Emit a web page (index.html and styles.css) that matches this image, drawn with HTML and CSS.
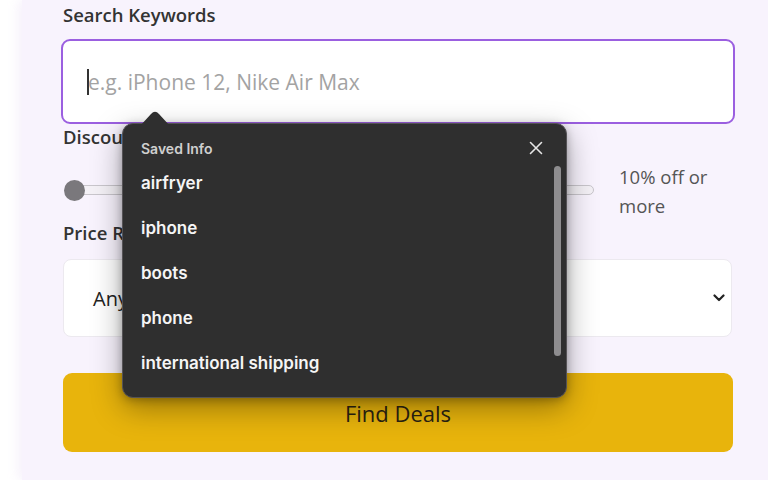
FILE: index.html
```html
<!DOCTYPE html>
<html>
<head>
<meta charset="utf-8">
<link rel="stylesheet" href="styles.css">
</head>
<body>
<div class="page">
  <div class="card">
    <div class="field field-keywords">
      <label class="label">Search Keywords</label>
      <div class="input">
        <span class="caret"></span>
        <span class="placeholder">e.g. iPhone 12, Nike Air Max</span>
      </div>
      <div class="popup">
        <svg class="arrow" width="30" height="16" viewBox="0 0 30 16"><path d="M0 16 L11 4 Q15 -0.5 19 4 L30 16 Z" fill="#2f2f2f"/></svg>
        <div class="popup-head">
          <span class="popup-title">Saved Info</span>
          <svg class="close" width="14" height="14" viewBox="0 0 14 14"><path d="M1.5 1.5 L12.5 12.5 M12.5 1.5 L1.5 12.5" stroke="#e6e6e6" stroke-width="1.6" stroke-linecap="round"/></svg>
        </div>
        <ul class="list">
          <li>airfryer</li>
          <li>iphone</li>
          <li>boots</li>
          <li>phone</li>
          <li>international shipping</li>
        </ul>
        <div class="scrollbar"></div>
      </div>
    </div>
    <div class="field field-discount">
      <label class="label">Discount</label>
      <div class="slider-row">
        <div class="slider">
          <span class="track"></span>
          <span class="thumb"></span>
        </div>
        <div class="slider-value">10% off or<br>more</div>
      </div>
    </div>
    <div class="field field-price">
      <label class="label">Price Range</label>
      <div class="select">
        <span class="select-text">Any</span>
        <svg class="chev" width="12" height="8" viewBox="0 0 12 8"><path d="M1.5 1.5 L6 6 L10.5 1.5" fill="none" stroke="#222" stroke-width="2.2" stroke-linecap="round" stroke-linejoin="round"/></svg>
      </div>
    </div>
    <button class="btn">Find Deals</button>
  </div>
</div>
</body>
</html>
```
FILE: styles.css
```css
* { box-sizing: border-box; }
html, body { margin: 0; padding: 0; }
body {
  background: #ffffff;
  font-family: "Open Sans", "Lato", sans-serif;
  width: 768px;
  height: 480px;
  overflow: hidden;
}
.page {
  padding-left: 22px;
  height: 480px;
}
.card {
  background: #f8f3fd;
  height: 480px;
  padding: 3px 35px 0 41px;
  display: flex;
  flex-direction: column;
  box-shadow: -4px 0 10px rgba(244, 238, 250, 0.8);
}
.field { position: relative; }
.label {
  display: block;
  font-size: 18.5px;
  line-height: 24px;
  font-weight: 600;
  color: #333;
}
.input {
  margin: 12px -2px 0 -2px;
  height: 85px;
  background: #fff;
  border: 2px solid #9b5fe0;
  border-radius: 9px;
  display: flex;
  align-items: center;
  padding-left: 24px;
  position: relative;
}
.caret {
  width: 2px;
  height: 26px;
  background: #333;
  margin-right: -1px;
}
.placeholder {
  font-size: 21px;
  color: #a3a3a3;
}
.field-discount { margin-top: 1px; }
.slider-row {
  display: flex;
  align-items: center;
  margin-top: 10px;
}
.slider {
  position: relative;
  width: 531px;
  height: 44px;
}
.track {
  position: absolute;
  left: 14px;
  right: 0;
  top: 17px;
  height: 10px;
  border: 1px solid #c9c6cc;
  border-radius: 5px;
  background: #f4f1f6;
}
.thumb {
  position: absolute;
  left: 1px;
  top: 12px;
  width: 21px;
  height: 21px;
  border-radius: 50%;
  background: #7a787c;
}
.slider-value {
  margin-left: 25px;
  margin-top: 3px;
  font-size: 18.5px;
  line-height: 29px;
  color: #555;
}
.field-price { margin-top: 1px; }
.select {
  margin-top: 14px;
  height: 78px;
  background: #fff;
  border: 1px solid #ece9ef;
  border-radius: 8px;
  display: flex;
  align-items: center;
  justify-content: space-between;
  padding: 0 6px 0 29px;
  margin-right: 1px;
}
.select-text {
  font-size: 20px;
  color: #222;
}
.btn {
  margin-top: 36px;
  height: 79px;
  border: none;
  border-radius: 9px;
  background: #e8b40c;
  font-family: inherit;
  font-size: 22px;
  color: #2a2212;
  padding: 0;
}
.popup {
  position: absolute;
  left: 59px;
  top: 120px;
  width: 445px;
  height: 275px;
  background: #2f2f2f;
  border: 1px solid #555356;
  border-radius: 11px;
  box-shadow: 0 10px 30px rgba(0,0,0,0.35), 0 2px 8px rgba(0,0,0,0.25);
  font-family: "Inter", "Liberation Sans", sans-serif;
  color: #fff;
  z-index: 5;
}
.arrow {
  position: absolute;
  left: 17px;
  top: -14px;
}
.popup-head {
  display: flex;
  justify-content: space-between;
  align-items: center;
  padding: 13px 23px 0 18px;
  height: 36px;
}
.popup-title {
  font-size: 14px;
  font-weight: 600;
  color: #cfcfcf;
}
.close { margin-top: -2px; }
.list {
  list-style: none;
  margin: 0;
  padding: 0 0 0 18px;
}
.list li {
  font-size: 17px;
  font-weight: 600;
  height: 45px;
  line-height: 45px;
  color: #f5f5f5;
}
.list li:first-child { margin-top: 1px; }
.scrollbar {
  position: absolute;
  right: 5px;
  top: 42px;
  width: 7px;
  height: 190px;
  border-radius: 4px;
  background: #8e8d8f;
}
```
